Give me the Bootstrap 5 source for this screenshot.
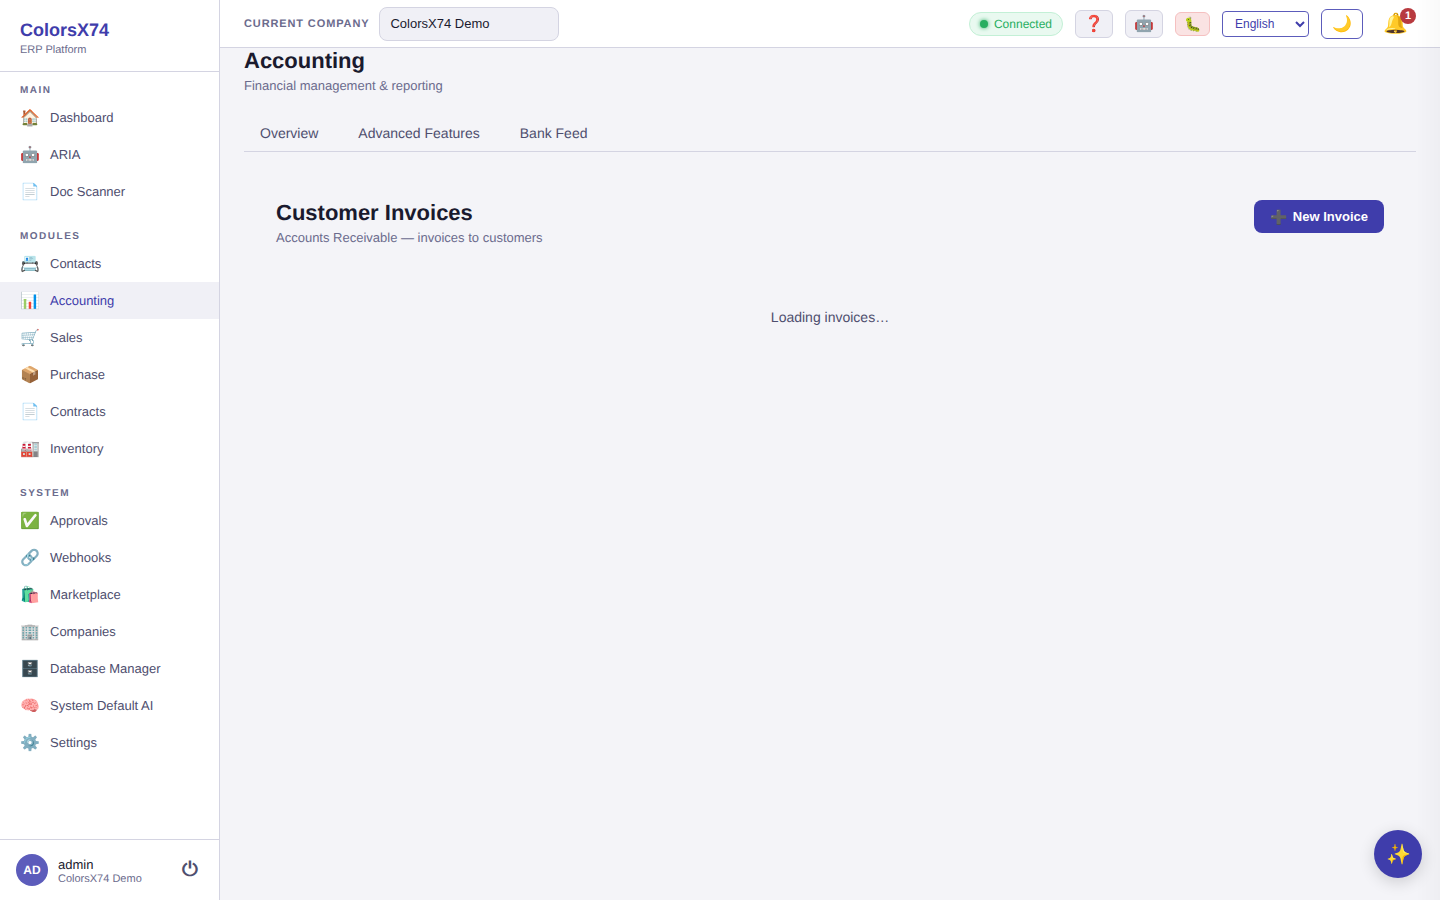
<!DOCTYPE html>
<html lang="en">
<head>
  <meta charset="UTF-8">
  <meta name="viewport" content="width=device-width, initial-scale=1.0">
  <title>ColorsX74 ERP</title>
  <link rel="stylesheet" href="https://cdn.jsdelivr.net/npm/bootstrap@5.3.2/dist/css/bootstrap.min.css">
  <style>
    html, body { height: 100%; }
    body {
      font-family: "Liberation Sans", Arial, sans-serif;
      background-color: #f4f4f8;
      color: #1a1a2e;
      overflow: hidden;
      text-rendering: geometricPrecision;
    }
    .app-shell { height: 100vh; }

    /* sidebar */
    .side-bar {
      width: 220px;
      flex: 0 0 220px;
      background: #fff;
      border-right: 1px solid #d4d4e2;
    }
    .brand-box { height: 72px; padding: 20px 20px 0; border-bottom: 1px solid #d4d4e2; }
    .brand-name { font-size: 18px; line-height: 21px; font-weight: 700; color: #3f3dab; }
    .brand-sub { font-size: 11px; line-height: 13px; margin-top: 3px; color: #6b6b8d; }
    .side-nav { flex: 1 1 auto; padding-top: 6px; }
    .side-group { margin-bottom: 14px; }
    .side-heading {
      font-size: 10px; line-height: 12px; font-weight: 700; letter-spacing: 1.5px;
      color: #6b6b8d; padding: 7px 20px 2px; height: 21px;
    }
    .side-link {
      height: 37px; padding: 0 20px; gap: 10px;
      font-size: 13px; color: #4e4e6e; text-decoration: none;
    }
    .side-link.current { background: #f0f0f6; color: #3f3dab; }
    .side-emoji { width: 20px; font-size: 16px; text-align: center; line-height: 1; padding-top: 2px; }
    .user-box { height: 61px; padding: 0 16px; border-top: 1px solid #d4d4e2; gap: 10px; }
    .user-avatar {
      width: 32px; height: 32px; background: #5c5cbb; color: #fff;
      font-size: 12px; font-weight: 700;
    }
    .user-text { padding-top: 2px; }
    .user-name { font-size: 13px; line-height: 15px; color: #1a1a2e; }
    .user-org { font-size: 11px; line-height: 14px; color: #6b6b8d; }
    .power-btn { color: #4e4e6e; padding: 0 4px 2px; margin-right: 1px; font-size: 20px; font-weight: 700; line-height: 1; font-family: "DejaVu Sans", sans-serif; }

    /* top bar */
    .top-bar {
      height: 48px; flex: 0 0 48px; background: #fff;
      border-bottom: 1px solid #d4d4e2; padding: 0 24px;
    }
    .company-label { font-size: 11px; line-height: 13px; padding-top: 2px; font-weight: 700; letter-spacing: 0.88px; color: #6b6b8d; margin-right: 10px; }
    .company-input {
      width: 180px; height: 34px; padding: 0 10px; font-size: 13px;
      background: #f0f0f6; border: 1px solid #d4d4e2; border-radius: 8px; color: #1a1a2e;
    }
    .conn-pill {
      height: 24px; padding: 0 10px; font-size: 12px; color: #27ae60; margin-right: 12px;
      background: #e9f9f0; border: 1px solid #c3f0d6; border-radius: 12px; gap: 6px;
    }
    .conn-dot { width: 8px; height: 8px; border-radius: 50%; background: #27ae60; box-shadow: 0 0 4px #27ae60; }
    .tool-btn {
      width: 38px; height: 28px; padding: 0; font-size: 16px; line-height: 1; margin-right: 12px;
      background: #f0f0f6; border: 1px solid #d4d4e2; border-radius: 6px;
    }
    .bug-btn { width: 35px; height: 24px; font-size: 14px; background: #fae3e3; border-color: #f5c0c0; }
    .lang-select {
      width: 87px; height: 26px; padding: 0 0 0 8px; font-size: 12px; color: #3f3dab;
      background-color: #fff; border: 1px solid #5c5cbb; border-radius: 4px; margin-right: 12px;
    }
    .moon-btn {
      width: 42px; height: 30px; padding: 0; font-size: 16px; line-height: 1; margin-right: 20px;
      background: #fff; border: 1px solid #5c5cbb; border-radius: 6px;
    }
    .bell-box { font-size: 20px; line-height: 1; width: 24px; margin-right: 9px; }
    .bell-count {
      top: -6px; right: -9px; width: 16px; height: 16px; font-size: 11px; font-weight: 700;
      background: #b83a3f; color: #fff; line-height: 16px; text-align: center;
    }

    /* page */
    .page-area { flex: 1 1 auto; padding: 0 24px; min-height: 0; }
    .page-title { font-size: 22px; line-height: 26px; font-weight: 700; margin: 0; color: #1a1a2e; }
    .page-sub { font-size: 13px; line-height: 15px; color: #6b6b8d; margin: 4px 0 0; }
    .tab-row { margin-top: 14px; height: 45px; border-bottom: 1px solid #d4d4e2; }
    .tab-link { padding: 0 16px; margin-right: 8px; font-size: 14px; line-height: 35px; color: #4e4e6e; text-decoration: none; }
    .invoice-head { padding: 48px 32px 0; }
    .invoice-title { font-size: 22px; line-height: 26px; font-weight: 700; margin: 0; color: #1a1a2e; }
    .invoice-sub { font-size: 13px; line-height: 15px; color: #6b6b8d; margin: 4px 0 0; }
    .new-btn {
      height: 33px; padding: 0 16px; gap: 6px; font-size: 13px; font-weight: 700;
      background: #3f3dab; color: #fff; border: 0; border-radius: 8px;
    }
    .new-btn .plus-emoji { font-size: 14px; line-height: 1; }
    .loading-text { margin-top: 64px; text-align: center; font-size: 14px; line-height: 16px; color: #4e4e6e; }

    /* right edge shade and floating button */
    .edge-shade {
      position: fixed; top: 0; right: 0; bottom: 0; width: 24px;
      background: linear-gradient(to right, rgba(0,0,0,0), rgba(0,0,0,.025));
      pointer-events: none;
    }
    .ai-fab {
      position: fixed; right: 18px; bottom: 22px; width: 48px; height: 48px; padding: 0;
      font-size: 20px; line-height: 1; background: #3f3dab; border: 0;
      box-shadow: 0 4px 16px rgba(0,0,0,.16);
    }
  </style>
</head>
<body>

<div class="d-flex app-shell">
  <aside class="side-bar d-flex flex-column">
    <div class="brand-box">
      <div class="brand-name">ColorsX74</div>
      <div class="brand-sub">ERP Platform</div>
    </div>
    <nav class="side-nav" id="side-nav"></nav>
    <div class="user-box d-flex align-items-center">
      <div class="user-avatar rounded-circle d-flex align-items-center justify-content-center">AD</div>
      <div class="user-text flex-grow-1">
        <div class="user-name">admin</div>
        <div class="user-org">ColorsX74 Demo</div>
      </div>
      <button class="btn power-btn border-0" aria-label="Log out">⏻</button>
    </div>
  </aside>

  <div class="d-flex flex-column flex-grow-1" style="min-width:0">
    <header class="top-bar d-flex align-items-center">
      <span class="company-label">CURRENT COMPANY</span>
      <input class="company-input" type="text" value="ColorsX74 Demo">
      <div class="ms-auto d-flex align-items-center">
        <span class="conn-pill d-flex align-items-center"><span class="conn-dot"></span>Connected</span>
        <button class="btn tool-btn">❓</button>
        <button class="btn tool-btn">🤖</button>
        <button class="btn tool-btn bug-btn">🐛</button>
        <select class="lang-select"><option>English</option></select>
        <button class="btn moon-btn">🌙</button>
        <div class="bell-box position-relative">🔔<span class="bell-count position-absolute rounded-circle">1</span></div>
      </div>
    </header>

    <main class="page-area">
      <h1 class="page-title">Accounting</h1>
      <p class="page-sub">Financial management &amp; reporting</p>
      <div class="tab-row d-flex align-items-end">
        <a class="tab-link" href="#">Overview</a>
        <a class="tab-link" href="#">Advanced Features</a>
        <a class="tab-link" href="#">Bank Feed</a>
      </div>
      <div class="invoice-head d-flex justify-content-between align-items-start">
        <div>
          <h2 class="invoice-title">Customer Invoices</h2>
          <p class="invoice-sub">Accounts Receivable — invoices to customers</p>
        </div>
        <button class="btn new-btn d-flex align-items-center"><span class="plus-emoji">➕</span> New Invoice</button>
      </div>
      <div class="loading-text">Loading invoices…</div>
    </main>
  </div>
</div>

<div class="edge-shade"></div>
<button class="btn ai-fab rounded-circle">✨</button>

<script>
  const groups = [
    { title: "MAIN", items: [["🏠", "Dashboard"], ["🤖", "ARIA"], ["📄", "Doc Scanner"]] },
    { title: "MODULES", items: [["📇", "Contacts"], ["📊", "Accounting"], ["🛒", "Sales"], ["📦", "Purchase"], ["📄", "Contracts"], ["🏭", "Inventory"]] },
    { title: "SYSTEM", items: [["✅", "Approvals"], ["🔗", "Webhooks"], ["🛍️", "Marketplace"], ["🏢", "Companies"], ["🗄️", "Database Manager"], ["🧠", "System Default AI"], ["⚙️", "Settings"]] }
  ];

  document.getElementById("side-nav").innerHTML = groups.map(g => `
    <div class="side-group">
      <div class="side-heading">${g.title}</div>
      ${g.items.map(([icon, name]) => `
        <a href="#" class="side-link d-flex align-items-center${name === "Accounting" ? " current" : ""}">
          <span class="side-emoji">${icon}</span>${name}
        </a>`).join("")}
    </div>`).join("");
</script>
<script src="https://cdn.jsdelivr.net/npm/bootstrap@5.3.2/dist/js/bootstrap.bundle.min.js"></script>
</body>
</html>
